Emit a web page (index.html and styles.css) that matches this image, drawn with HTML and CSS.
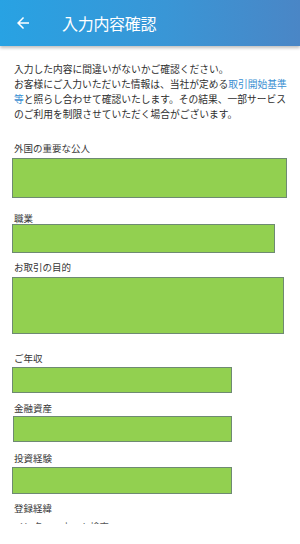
FILE: index.html
```html
<!DOCTYPE html>
<html lang="ja">
<head>
<meta charset="utf-8">
<link rel="stylesheet" href="styles.css">
</head>
<body>
<header class="appbar">
  <svg class="back" viewBox="0 0 24 24" width="18" height="18"><path d="M20 11H7.83l5.59-5.59L12 4l-8 8 8 8 1.41-1.41L7.83 13H20v-2z" fill="#fff"/></svg>
  <h1 class="title">入力内容確認</h1>
</header>
<main class="content">
  <p class="intro">入力した内容に間違いがないかご確認ください。<br>お客様にご入力いただいた情報は、当社が定める<a class="link">取引開始基準</a><br><a class="link">等</a>と照らし合わせて確認いたします。その結果、一部サービス<br>のご利用を制限させていただく場合がございます。</p>

  <section class="field f1">
    <div class="label">外国の重要な公人</div>
    <div class="box"></div>
  </section>
  <section class="field f2">
    <div class="label">職業</div>
    <div class="box"></div>
  </section>
  <section class="field f3">
    <div class="label">お取引の目的</div>
    <div class="box"></div>
  </section>
  <section class="field f4">
    <div class="label">ご年収</div>
    <div class="box"></div>
  </section>
  <section class="field f5">
    <div class="label">金融資産</div>
    <div class="box"></div>
  </section>
  <section class="field f6">
    <div class="label">投資経験</div>
    <div class="box"></div>
  </section>
  <section class="field f7">
    <div class="label">登録経緯</div>
    <div class="clip"><span class="cliptext">インター　ネット検索</span></div>
  </section>
</main>
</body>
</html>
```

FILE: styles.css
```css
html, body {
  margin: 0;
  padding: 0;
  background: #fff;
}
body {
  width: 300px;
  height: 544px;
  overflow: hidden;
  font-family: "Noto Sans CJK JP", "Noto Sans", sans-serif;
  color: #333;
}
.appbar {
  height: 46px;
  display: flex;
  align-items: center;
  background: linear-gradient(90deg, #28a2e3 0%, #3996d6 55%, #4a86c6 100%);
  box-shadow: 0 2px 3px rgba(0, 0, 0, 0.25);
  position: relative;
  z-index: 1;
}
.back {
  margin-left: 14px;
  flex: none;
}
.title {
  margin: 0 0 0 30px;
  font-size: 16px;
  font-weight: 400;
  color: #fff;
  line-height: 1;
  letter-spacing: -0.3px;
}
.content {
  padding: 0 0 0 12px;
}
.intro {
  margin: 16px 0 0 2px;
  font-size: 9.75px;
  line-height: 15px;
  color: #2e2e2e;
  white-space: nowrap;
}
.link {
  color: #3a8fd2;
}
.label {
  font-size: 9.5px;
  line-height: 12px;
  height: 12px;
  padding-left: 2px;
  color: #363636;
  white-space: nowrap;
}
.box {
  box-sizing: border-box;
  background: #92d050;
  border: 1px solid #6e8a72;
}
.f1 { margin-top: 20px; }
.f1 .box { margin-top: 4px; width: 275px; height: 40px; }
.f2 { margin-top: 14px; }
.f2 .box { margin-top: 0; width: 263px; height: 29px; }
.f3 { margin-top: 8px; }
.f3 .box { margin-top: 4px; width: 272px; height: 57px; }
.f4 { margin-top: 18px; }
.f4 .box { margin-top: 3px; width: 220px; height: 26px; }
.f5 { margin-top: 9px; }
.f5 .box { margin-top: 2px; width: 219px; height: 26px; margin-left: 1px; }
.f6 { margin-top: 10px; }
.f6 .box { margin-top: 3px; width: 220px; height: 27px; }
.f7 { margin-top: 8px; }
.clip {
  margin-top: 7px;
  height: 3px;
  overflow: hidden;
  padding-left: 2px;
}
.cliptext {
  display: block;
  margin-top: -1px;
  font-size: 9.5px;
  line-height: 12px;
  color: #555;
  white-space: nowrap;
}
```
